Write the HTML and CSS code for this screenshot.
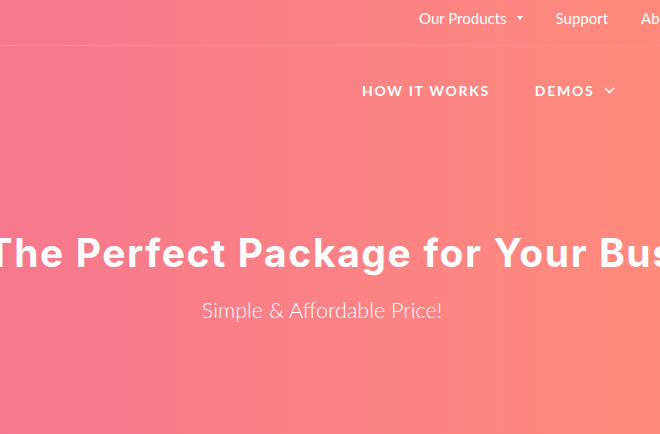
FILE: index.html
```html
<!DOCTYPE html>
<html lang="en">
<head>
<meta charset="utf-8">
<title>Pricing</title>
<link rel="stylesheet" href="styles.css">
</head>
<body>
<div class="page">
  <div class="topbar">
    <ul class="topnav">
      <li class="topnav-item">Our Products <span class="caret"></span></li>
      <li class="topnav-item">Support</li>
      <li class="topnav-item">About Us</li>
    </ul>
  </div>
  <header class="mainbar">
    <ul class="mainnav">
      <li class="mainnav-item">HOW IT WORKS</li>
      <li class="mainnav-item">DEMOS
        <svg class="chev" width="11" height="7" viewBox="0 0 11 7"><path d="M1 1l4.5 4.5L10 1" fill="none" stroke="#fff" stroke-width="1.6"/></svg>
      </li>
      <li class="mainnav-item">PRICING</li>
    </ul>
  </header>
  <section class="hero">
    <div class="hero-title-wrap">
      <h1 class="hero-title">The Perfect Package for Your Business</h1>
    </div>
    <p class="hero-sub">Simple &amp; Affordable Price!</p>
  </section>
</div>
</body>
</html>
```

FILE: styles.css
```css
html, body {
  margin: 0;
  padding: 0;
}
body {
  width: 660px;
  height: 434px;
  overflow: hidden;
  font-family: "Lato", "Open Sans", sans-serif;
  color: #fff;
}
.page {
  height: 434px;
  background: linear-gradient(90deg, #f6788e 0%, #fa8286 50%, #fe8a7b 100%);
  overflow: hidden;
}
ul {
  list-style: none;
  margin: 0;
  padding: 0;
}
.topbar {
  height: 45px;
  border-bottom: 1px solid rgba(255, 255, 255, 0.16);
}
.topnav {
  display: flex;
  align-items: center;
  padding-top: 8px;
  height: 20px;
  padding-left: 419px;
  gap: 33px;
  white-space: nowrap;
}
.topnav-item {
  font-size: 15px;
  line-height: 20px;
  display: flex;
  align-items: center;
}
.caret {
  display: inline-block;
  margin-left: 10px;
  width: 0;
  height: 0;
  border-left: 3px solid transparent;
  border-right: 3px solid transparent;
  border-top: 4px solid #fff;
}
.mainbar {
  height: 88px;
}
.mainnav {
  display: flex;
  align-items: center;
  height: 88px;
  padding-left: 362px;
  gap: 45px;
  white-space: nowrap;
}
.mainnav-item {
  font-size: 14px;
  font-weight: 700;
  letter-spacing: 1.7px;
  display: flex;
  align-items: center;
}
.chev {
  margin-left: 10px;
}
.hero {
  width: 644px;
  display: flex;
  flex-direction: column;
  align-items: center;
  padding-top: 97px;
}
.hero-title-wrap {
  width: 644px;
  box-sizing: border-box;
  padding-left: 128px;
  display: flex;
  justify-content: center;
}
.hero-title {
  margin: 0;
  white-space: nowrap;
  font-family: "Inter", sans-serif;
  font-weight: 700;
  font-size: 39px;
  line-height: 44px;
  letter-spacing: 1.6px;
}
.hero-sub {
  margin: 22px 0 0;
  font-size: 21.5px;
  font-weight: 300;
}
```
